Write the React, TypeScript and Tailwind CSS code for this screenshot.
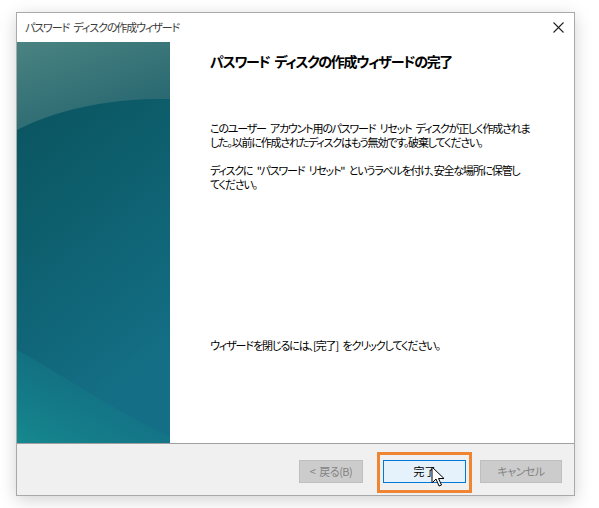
import React from 'react';

const jp = "font-['Meiryo_UI','Noto_Sans_CJK_JP',sans-serif] [font-feature-settings:'palt']";

const SideArt: React.FC = () => (
    <svg width="153" height="401" viewBox="0 0 153 401" className="block">
        <defs>
            <linearGradient id="base" x1="0" y1="0" x2="0.3" y2="1">
                <stop offset="0" stopColor="#0a4f5b" />
                <stop offset="0.45" stopColor="#0d5e6c" />
                <stop offset="1" stopColor="#146f86" />
            </linearGradient>
            <linearGradient id="gloss" x1="0" y1="0" x2="0.6" y2="1">
                <stop offset="0" stopColor="#4a8381" />
                <stop offset="1" stopColor="#266670" />
            </linearGradient>
            <linearGradient id="low" x1="0" y1="1" x2="1" y2="0">
                <stop offset="0" stopColor="#16898e" />
                <stop offset="0.6" stopColor="#137887" stopOpacity="0.4" />
                <stop offset="1" stopColor="#137887" stopOpacity="0" />
            </linearGradient>
        </defs>
        <rect width="153" height="401" fill="url(#base)" />
        <path d="M0 0 H153 V57 C110 56 50 62 0 88 Z" fill="url(#gloss)" />
        <path d="M0 308 C40 330 100 370 153 395 V401 H0 Z" fill="url(#low)" />
    </svg>
);

const Cursor: React.FC = () => (
    <svg width="14" height="22" viewBox="0 0 14 22">
        <path d="M1 1 V17 L5 13 L8 20 L10.5 19 L7.5 12.5 H13 Z" fill="#fff" stroke="#000" strokeWidth="1" strokeLinejoin="round" />
    </svg>
);

export default function App() {
    return (
        <div className={`w-[599px] h-[508px] bg-white pl-[16px] pt-[12px] ${jp}`}>
            <div className="relative w-[559px] h-[484px] border border-[#a9a9a9] bg-white shadow-[0_4px_16px_rgba(0,0,0,0.18)] flex flex-col">
                {/* title bar */}
                <div className="h-[29px] flex items-center justify-between pl-[8px] pr-[10px]">
                    <span className="text-[11px] tracking-[-1.1px] [word-spacing:3px] text-[#3a3a3a]">パスワード ディスクの作成ウィザード</span>
                    <svg width="11" height="11" viewBox="0 0 11 11">
                        <path d="M0.5 0.5 L10.5 10.5 M10.5 0.5 L0.5 10.5" stroke="#222" strokeWidth="1.1" />
                    </svg>
                </div>

                {/* content */}
                <div className="h-[401px] flex">
                    <div className="w-[153px] shrink-0">
                        <SideArt />
                    </div>
                    <div className="flex-1 flex flex-col pl-[40px] text-black">
                        <h1 className="mt-[10px] text-[14px] tracking-[-1.3px] [word-spacing:3px] font-bold leading-[18px]">パスワード ディスクの作成ウィザードの完了</h1>
                        <div className="mt-[51px] text-[11px] tracking-[-1.2px] [word-spacing:3px] leading-[14px] whitespace-nowrap">
                            <p>このユーザー アカウント用のパスワード リセット ディスクが正しく作成されま<br />した。以前に作成されたディスクはもう無効です。破棄してください。</p>
                            <p className="mt-[14px]">ディスクに "パスワード リセット" というラベルを付け、安全な場所に保管し<br />てください。</p>
                        </div>
                        <p className="mt-[147px] text-[11px] tracking-[-1.1px] [word-spacing:3px] leading-[14px] whitespace-nowrap">ウィザードを閉じるには、[完了] をクリックしてください。</p>
                    </div>
                </div>

                {/* bottom bar */}
                <div className="flex-1 border-t border-[#a0a0a0] bg-[#f0f0f0] flex justify-end items-start pt-[16px] pr-[12px]">
                    <button className="w-[64px] h-[23px] border border-[#bfbfbf] bg-[#cccccc] text-[11px] tracking-[-0.5px] [word-spacing:2px] text-[#838383]">&lt; 戻る(B)</button>
                    <button className="ml-[20px] w-[83px] h-[23px] border border-[#0078d7] bg-[#e5f1fb] text-[11px] text-black">完了</button>
                    <button className="ml-[14px] w-[82px] h-[23px] border border-[#bfbfbf] bg-[#cccccc] text-[11px] tracking-[-0.5px] text-[#838383]">キャンセル</button>
                </div>

                {/* highlight + cursor */}
                <div className="absolute left-[360px] top-[439px] w-[95px] h-[41px] border-[3px] border-[#ef8532]" />
                <div className="absolute left-[414px] top-[453px]">
                    <Cursor />
                </div>
            </div>
        </div>
    );
}
